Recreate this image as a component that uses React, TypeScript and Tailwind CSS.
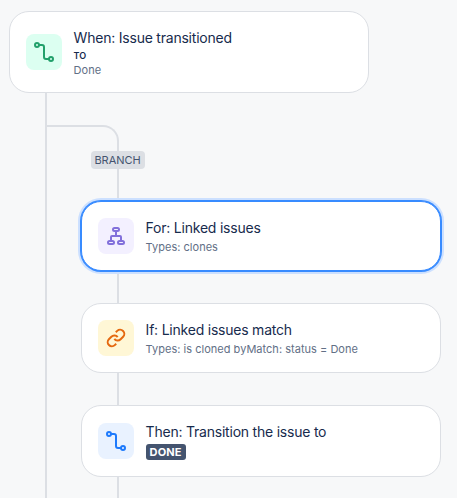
import type { ReactNode } from "react";

function TransitionIcon() {
  return (
    <svg width="36" height="36" viewBox="0 0 36 36" fill="none" stroke="currentColor" strokeWidth="2">
      <circle cx="11" cy="11" r="2" />
      <circle cx="25" cy="25" r="2" />
      <path d="M13 11h3a2 2 0 0 1 2 2v10a2 2 0 0 0 2 2H23" />
    </svg>
  );
}

function TreeIcon() {
  return (
    <svg width="36" height="36" viewBox="0 0 36 36" fill="none" stroke="currentColor" strokeWidth="2">
      <rect x="15" y="10" width="6" height="3" rx="1.5" />
      <rect x="10" y="23" width="6" height="3" rx="1.5" />
      <rect x="20" y="23" width="6" height="3" rx="1.5" />
      <path d="M18 13v5M13 23v-4a1 1 0 0 1 1-1h8a1 1 0 0 1 1 1v4" />
    </svg>
  );
}

function ChainIcon() {
  return (
    <svg width="20" height="20" viewBox="0 0 24 24" fill="none" stroke="currentColor" strokeWidth="2.4">
      <path d="M10 13a5 5 0 0 0 7.54.54l3-3a5 5 0 0 0-7.07-7.07l-1.72 1.71" />
      <path d="M14 11a5 5 0 0 0-7.54-.54l-3 3a5 5 0 0 0 7.07 7.07l1.71-1.71" />
    </svg>
  );
}

type CardProps = {
  className: string;
  tile: string;
  icon: ReactNode;
  title: string;
  body?: string;
  children: ReactNode;
};

function Card({ className, tile, icon, title, body = "", children }: CardProps) {
  return (
    <div className={`flex w-[360px] shrink-0 items-center rounded-[20px] border bg-white pl-4 ${className}`}>
      <div className={`flex size-9 shrink-0 items-center justify-center rounded-lg ${tile}`}>{icon}</div>
      <div className={`ml-[11.6px] whitespace-nowrap ${body}`}>
        <div className="text-sm leading-5 tracking-[-0.22px] text-[#172b4d]">{title}</div>
        {children}
      </div>
    </div>
  );
}

const detail = "pt-px text-[11px] leading-4 tracking-[0.02px] text-[#626f86]";

export default function App() {
  return (
    <div className="flex h-[498px] w-[457px] flex-col overflow-hidden bg-[#f7f8f9] pt-[11px] pl-[9px] font-['Inter',sans-serif]">
      <Card className="h-[82px] border-[#dcdfe4]" tile="bg-[#dcfff1] text-[#22a06b]" icon={<TransitionIcon />} title="When: Issue transitioned" body="pt-0.5">
        <div className="pt-px text-[9px] leading-[14px] font-semibold text-[#172b4d]">TO</div>
        <div className="text-[11px] leading-[15px] text-[#626f86]">Done</div>
      </Card>
      <div className="flex flex-1 items-start pl-9">
        <div className="h-[405px] w-0.5 shrink-0 bg-[#dcdfe4]" />
        <div className="flex shrink-0 flex-col pt-8">
          <div className="h-[26px] w-[72px] rounded-tr-[16px] border-t-2 border-r-2 border-[#dcdfe4]" />
          <div className="ml-11 flex h-[18px] w-[54px] items-center rounded-[4px] bg-[#dcdfe4] pl-[3.4px] text-[11px] leading-none text-[#44546f]">
            BRANCH
          </div>
          <div className="ml-[70px] h-8 w-0.5 bg-[#dcdfe4]" />
          <Card
            className="ml-[34px] h-[70px] border-[#388bff] shadow-[0_0_0_1px_#388bff,0_0_0_3px_#cce0ff]"
            tile="bg-[#f3f0ff] text-[#8270db]"
            icon={<TreeIcon />}
            title="For: Linked issues"
            body="pt-px"
          >
            <div className={detail}>Types: clones</div>
          </Card>
          <div className="mt-[3px] ml-[70px] h-[29px] w-0.5 bg-[#dcdfe4]" />
          <Card className="ml-[34px] h-[70px] border-[#dcdfe4]" tile="bg-[#fff7d6] text-[#e56910]" icon={<ChainIcon />} title="If: Linked issues match" body="pt-px">
            <div className={detail}>Types: is cloned byMatch: status = Done</div>
          </Card>
          <div className="ml-[70px] h-8 w-0.5 bg-[#dcdfe4]" />
          <Card className="ml-[34px] h-[72px] border-[#dcdfe4]" tile="bg-[#e9f2ff] text-[#1d7afc]" icon={<TransitionIcon />} title="Then: Transition the issue to">
            <div className="mt-0.5 flex h-4 w-10 items-center rounded-[3px] bg-[#44546f] pl-1 text-[11px] leading-none font-bold tracking-[0.1px] text-white">
              DONE
            </div>
          </Card>
          <div className="ml-[70px] h-[21px] w-0.5 bg-[#dcdfe4]" />
        </div>
      </div>
    </div>
  );
}
